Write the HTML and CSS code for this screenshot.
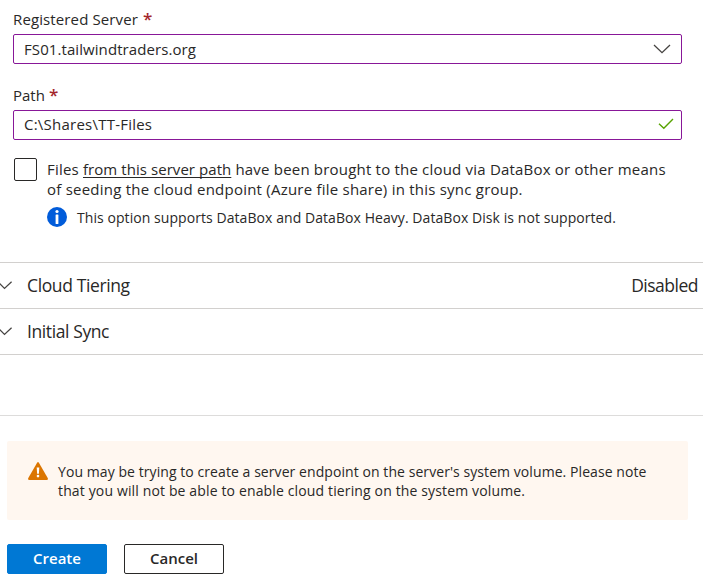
FILE: index.html
```html
<!DOCTYPE html>
<html lang="en">
<head>
<meta charset="utf-8">
<title>Create server endpoint</title>
<link rel="stylesheet" href="styles.css">
</head>
<body>
<form class="fields">
  <div class="label"><span class="t-server">Registered Server</span><span class="required">*</span></div>
  <div class="field">
    <span class="t-host">FS01.tailwindtraders.org</span>
    <svg class="chevron" width="18" height="10" viewBox="0 0 18 10"><path d="M1 1l8 7.7L17 1"/></svg>
  </div>
  <div class="label label-path"><span class="t-path">Path</span><span class="required">*</span></div>
  <div class="field">
    <span class="t-dir">C:\Shares\TT-Files</span>
    <svg class="check" width="16" height="12" viewBox="0 0 16 12"><path d="M1 5.8l4.8 4.4L15 1"/></svg>
  </div>
  <div class="seed">
    <span class="checkbox"></span>
    <div class="seed-body">
      <div class="seed-line"><span class="t-seed1">Files <u>from this server path</u> have been brought to the cloud via DataBox or other means</span></div>
      <div class="seed-line"><span class="t-seed2">of seeding the cloud endpoint (Azure file share) in this sync group.</span></div>
      <div class="info">
        <svg width="20" height="20" viewBox="0 0 20 20"><circle cx="10" cy="10" r="10" fill="#015cda"/><circle cx="10" cy="4.5" r="1.6" fill="#fff"/><rect x="8.6" y="7.4" width="2.8" height="9.6" rx=".5" fill="#fff"/></svg>
        <span class="t-info">This option supports DataBox and DataBox Heavy. DataBox Disk is not supported.</span>
      </div>
    </div>
  </div>
</form>
<div class="sections">
  <div class="section">
    <svg class="chevron" width="12" height="9" viewBox="0 0 12 9"><path d="M-2 .8l6.5 6.6L11.6.8"/></svg>
    <span class="t-tier">Cloud Tiering</span><span class="status">Disabled</span>
  </div>
  <div class="section">
    <svg class="chevron" width="12" height="9" viewBox="0 0 12 9"><path d="M-2 .8l6.5 6.6L11.6.8"/></svg>
    <span class="t-sync">Initial Sync</span>
  </div>
</div>
<footer class="footer">
  <div class="warning">
    <svg width="20" height="18" viewBox="0 0 20 18"><path d="M9.1.7q.9-1.4 1.8 0l8.8 15.4q.8 1.9-1 1.9H1.3q-1.8 0-1-1.9z" fill="#db7500"/><path d="M8.7 5.4h2.6l-.4 6.4H9.1z" fill="#fff"/><circle cx="10" cy="14.1" r="1.3" fill="#fff"/></svg>
    <div class="warning-text">
      <div><span class="t-warn1">You may be trying to create a server endpoint on the server's system volume. Please note</span></div>
      <div><span class="t-warn2">that you will not be able to enable cloud tiering on the system volume.</span></div>
    </div>
  </div>
  <div class="actions">
    <button class="button primary"><span>Create</span></button>
    <button class="button"><span>Cancel</span></button>
  </div>
</footer>
</body>
</html>
```
FILE: styles.css
```css
* { box-sizing: border-box; }
body { margin: 0; background: #fff; color: #292827; font: 15px/20px "Open Sans", "Noto Sans", sans-serif; white-space: nowrap; }
svg { display: block; flex: none; }
.fields { height: 262px; padding: 9px 21px 0 13px; }
.label { display: flex; height: 25px; gap: 5px; }
.label-path { margin-top: 21px; }
.label-path .required { margin-left: -1px; }
.required { color: #a4262c; font-size: 17px; font-weight: 600; line-height: 20px; }
.field { display: flex; align-items: center; justify-content: space-between; height: 30px; padding: 0 10px; border: 1px solid #881798; border-radius: 2px; }
.field .check { margin-right: -3px; margin-bottom: 2px; }
.chevron path { fill: none; stroke: #454341; stroke-width: 1.3; }
.check path { fill: none; stroke: #57a300; stroke-width: 1.4; }
.t-server { letter-spacing: .12px; }
.t-host { letter-spacing: .08px; }
.t-dir { letter-spacing: .23px; padding-bottom: 2px; }
.t-seed1 { letter-spacing: .2px; }
.t-seed1 u { letter-spacing: .06px; }
.t-seed2 { letter-spacing: .225px; }
.t-info { letter-spacing: .065px; padding-top: 1px; }
.t-warn1 { letter-spacing: .07px; }
.t-warn2 { letter-spacing: .14px; }
.seed { display: flex; margin: 18px 0 0 1px; gap: 10px; }
.checkbox { width: 23px; height: 23px; border: 1px solid #292827; border-radius: 2px; }
.seed-body { padding-top: 1px; }
.seed-line { height: 20px; }
.info { display: flex; gap: 10px; margin-top: 8px; font-size: 14px; }
u { text-underline-offset: 2px; text-decoration-thickness: 1px; text-decoration-skip-ink: none; }
.sections { height: 153px; border-top: 1px solid #d2d0ce; font-size: 17.5px; }
.section { display: flex; align-items: center; height: 46px; border-bottom: 1px solid #d2d0ce; padding-right: 5px; }
.section .chevron { margin-right: 15px; }
.section span { padding-bottom: 1px; letter-spacing: -.4px; }
.section .t-tier { letter-spacing: -.38px; }
.section .status { margin-left: auto; letter-spacing: -.5px; }
.footer { border-top: 1px solid #dddcdb; padding: 25px 15px 0 7px; }
.warning { display: flex; height: 79px; padding: 21px 21px; gap: 10px; border-radius: 2px; background: #fff7f0; font-size: 14px; line-height: 19px; }
.actions { display: flex; gap: 17px; margin-top: 24px; }
.button { width: 100px; height: 30px; padding: 0 0 2px; border: 1px solid #292827; border-radius: 2px; background: #fff; color: #292827; font: 600 15px/20px "Open Sans", sans-serif; }
.primary { border-color: #0078d4; background: #0078d4; color: #fff; }
```
